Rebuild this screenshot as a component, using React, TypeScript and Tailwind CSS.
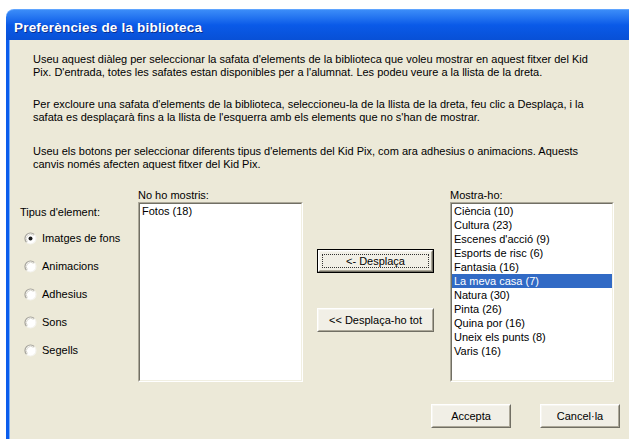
import React from 'react';

const paragraphs: string[][] = [
  [
    "Useu aquest diàleg per seleccionar la safata d'elements de la biblioteca que voleu mostrar en aquest fitxer del Kid",
    "Pix. D'entrada, totes les safates estan disponibles per a l'alumnat. Les podeu veure a la llista de la dreta.",
  ],
  [
    "Per excloure una safata d'elements de la biblioteca, seleccioneu-la de la llista de la dreta, feu clic a Desplaça, i la",
    "safata es desplaçarà fins a la llista de l'esquerra amb els elements que no s'han de mostrar.",
  ],
  [
    "Useu els botons per seleccionar diferents tipus d'elements del Kid Pix, com ara adhesius o animacions. Aquests",
    "canvis només afecten aquest fitxer del Kid Pix.",
  ],
];

const types = ['Imatges de fons', 'Animacions', 'Adhesius', 'Sons', 'Segells'];

const shown = [
  'Ciència (10)',
  'Cultura (23)',
  "Escenes d'acció (9)",
  'Esports de risc (6)',
  'Fantasia (16)',
  'La meva casa (7)',
  'Natura (30)',
  'Pinta (26)',
  'Quina por (16)',
  'Uneix els punts (8)',
  'Varis (16)',
];

const Radio: React.FC<{ checked?: boolean }> = ({ checked }) => (
  <svg width="13" height="13" viewBox="0 0 13 13" className="shrink-0">
    <circle cx="6.5" cy="6.5" r="5.5" fill="#fff" />
    <path d="M2.6 10.4 A5.5 5.5 0 0 1 10.4 2.6" fill="none" stroke="#a3a199" strokeWidth="1.2" />
    <path d="M10.4 2.6 A5.5 5.5 0 0 1 2.6 10.4" fill="none" stroke="#f4f3ee" strokeWidth="1.2" />
    <path d="M3.4 9.6 A4.4 4.4 0 0 1 9.6 3.4" fill="none" stroke="#d8d6cd" strokeWidth="1" />
    {checked && <circle cx="6.5" cy="6.5" r="2" fill="#1c1c1c" />}
  </svg>
);

const Button: React.FC<{ label: string; focused?: boolean; className?: string }> = ({ label, focused, className }) => (
  <div className={`${className ?? ''} ${focused ? 'border border-black' : ''}`}>
    <div className="h-full border border-t-white border-l-white border-b-[#716f64] border-r-[#716f64] bg-[#f1efe6]">
      <div className="h-full border border-t-[#f7f6f0] border-l-[#f7f6f0] border-b-[#aca899] border-r-[#aca899] p-[2px]">
        <div
          className={`h-full flex items-center justify-center ${focused ? 'border border-dotted border-[#333]' : ''}`}
        >
          {label}
        </div>
      </div>
    </div>
  </div>
);

const ListBox: React.FC<{ items: string[]; selected?: number }> = ({ items, selected }) => (
  <div className="w-full h-[180px] border border-t-[#aca899] border-l-[#aca899] border-b-white border-r-white">
    <div className="h-full border border-t-[#716f64] border-l-[#716f64] border-b-[#f1efe2] border-r-[#f1efe2] bg-white">
      {items.map((it, i) => (
        <div
          key={it}
          className={`h-[14px] leading-[14px] pl-[2px] whitespace-nowrap ${
            i === selected ? 'bg-[#316ac5] text-white' : 'text-black'
          }`}
        >
          {it}
        </div>
      ))}
    </div>
  </div>
);

export default function App() {
  return (
    <div className="w-[629px] h-[439px] overflow-hidden bg-white pt-[9px] pl-[6px] font-['Liberation_Sans',Arial,sans-serif] text-[11px] text-black">
      <div className="w-[640px] h-[460px] flex flex-col">
        {/* title bar */}
        <div className="h-[31px] shrink-0 rounded-tl-[8px] bg-gradient-to-b from-[#3b8cf8] via-[#0a5ae8] to-[#0850d6] flex items-center pl-[8px] pt-[6px] border-t border-t-[#5fa4ff]">
          <span className="text-white font-bold text-[13.5px] tracking-[0.2px] [text-shadow:1px_1px_0_#0a2f8f]">
            Preferències de la biblioteca
          </span>
        </div>

        {/* body */}
        <div className="flex-1 flex bg-[#ece9d8]">
          <div className="w-[3px] bg-[#0b5ded]" />
          <div className="w-[1px] bg-[#7fb0f5]" />
          <div className="flex-1 flex flex-col">
            <div className="pl-[23px] pt-[13px] flex flex-col leading-[13px]">
              {paragraphs.map((p, i) => (
                <p key={i} className={`whitespace-nowrap ${i === 1 ? 'mt-[19px]' : i === 2 ? 'mt-[21px]' : ''}`}>
                  {p[0]}
                  <br />
                  {p[1]}
                </p>
              ))}
            </div>

            <div className="flex mt-[18px] pl-[10px]">
              <div className="w-[118px] pt-[17px]">
                <div className="leading-[13px]">Tipus d'element:</div>
                <div className="mt-[13px] flex flex-col gap-[15px] pl-[4px]">
                  {types.map((t, i) => (
                    <div key={t} className="flex items-center gap-[5px] h-[13px]">
                      <Radio checked={i === 0} />
                      <span>{t}</span>
                    </div>
                  ))}
                </div>
              </div>

              <div className="w-[165px]">
                <div className="leading-[13px] h-[13px]">No ho mostris:</div>
                <ListBox items={['Fotos (18)']} />
              </div>

              <div className="w-[117px] ml-[14px] pt-[60px] flex flex-col gap-[35px]">
                <Button label="<- Desplaça" focused className="h-[24px]" />
                <Button label="<< Desplaça-ho tot" className="h-[24px]" />
              </div>

              <div className="w-[164px] ml-[16px]">
                <div className="leading-[13px] h-[13px]">Mostra-ho:</div>
                <ListBox items={shown} selected={5} />
              </div>
            </div>

            <div className="flex pl-[421px] gap-[29px] mt-[22px]">
              <Button label="Accepta" className="w-[80px] h-[24px]" />
              <Button label="Cancel·la" className="w-[80px] h-[24px]" />
            </div>
          </div>
        </div>
      </div>
    </div>
  );
}
